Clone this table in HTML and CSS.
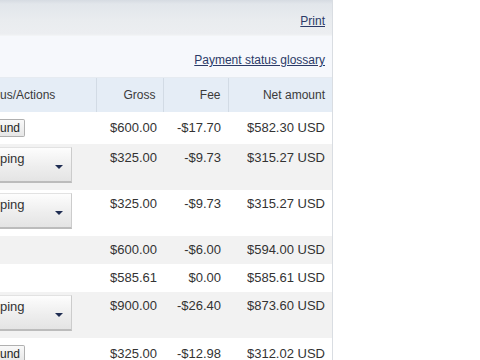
FILE: index.html
```html
<!DOCTYPE html>
<html>
<head>
<meta charset="utf-8">
<link rel="stylesheet" href="styles.css">
</head>
<body>
<div class="panel">
  <div class="topbar"><a class="link" href="#">Print</a></div>
  <div class="glossary"><a class="link" href="#">Payment status glossary</a></div>
  <table class="grid">
    <colgroup>
      <col class="c-status"><col class="c-gross"><col class="c-fee"><col class="c-net">
    </colgroup>
    <thead>
      <tr>
        <th class="first">us/Actions</th>
        <th>Gross</th>
        <th>Fee</th>
        <th>Net amount</th>
      </tr>
    </thead>
    <tbody>
      <tr class="plain">
        <td class="first"><button class="btn">und</button></td>
        <td>$600.00</td><td>-$17.70</td><td>$582.30 USD</td>
      </tr>
      <tr class="sel alt">
        <td class="first"><div class="dd"><span>ping</span><i class="arrow"></i></div></td>
        <td>$325.00</td><td>-$9.73</td><td>$315.27 USD</td>
      </tr>
      <tr class="sel">
        <td class="first"><div class="dd"><span>ping</span><i class="arrow"></i></div></td>
        <td>$325.00</td><td>-$9.73</td><td>$315.27 USD</td>
      </tr>
      <tr class="plain alt">
        <td class="first"></td>
        <td>$600.00</td><td>-$6.00</td><td>$594.00 USD</td>
      </tr>
      <tr class="plain">
        <td class="first"></td>
        <td>$585.61</td><td>$0.00</td><td>$585.61 USD</td>
      </tr>
      <tr class="sel alt">
        <td class="first"><div class="dd"><span>ping</span><i class="arrow"></i></div></td>
        <td>$900.00</td><td>-$26.40</td><td>$873.60 USD</td>
      </tr>
      <tr class="plain">
        <td class="first"><button class="btn">und</button></td>
        <td>$325.00</td><td>-$12.98</td><td>$312.02 USD</td>
      </tr>
    </tbody>
  </table>
</div>
</body>
</html>
```
FILE: styles.css
```css
html, body {
  margin: 0;
  padding: 0;
  background: #ffffff;
  height: 100%;
  overflow: hidden;
}
body {
  font-family: "Liberation Sans", Arial, sans-serif;
  color: #333333;
}
.panel {
  width: 332px;
  min-height: 100%;
  border-right: 1px solid #d9dde2;
  background: #ffffff;
}
.topbar {
  height: 36px;
  box-sizing: border-box;
  background: linear-gradient(#d6dbe2 0px, #e2e6eb 4px, #e9ecef 20px, #eceef1 34px, #f4f6f8 36px);
  display: flex;
  justify-content: flex-end;
  align-items: flex-start;
  padding: 14px 7px 0 0;
}
.glossary {
  height: 42px;
  box-sizing: border-box;
  background: #f6f8fc;
  display: flex;
  justify-content: flex-end;
  align-items: flex-start;
  padding: 17px 7px 0 0;
  border-bottom: 1px solid #e6ebf1;
}
.link {
  font-size: 12px;
  line-height: 14px;
  color: #2b3a67;
  text-decoration: underline;
}
.grid {
  width: 332px;
  border-collapse: collapse;
  table-layout: fixed;
}
.c-status { width: 96px; }
.c-gross { width: 67px; }
.c-fee { width: 65px; }
.c-net { width: 104px; }
.grid th {
  height: 34px;
  background: #e5edf6;
  font-weight: normal;
  font-size: 12px;
  text-align: right;
  padding: 0 7px 0 0;
  border-left: 1px solid #d2dbe5;
  color: #3a3a3a;
}
.grid th.first {
  text-align: left;
  padding-left: 0;
  border-left: none;
}
.grid td {
  font-size: 13px;
  line-height: 16px;
  text-align: right;
  padding: 6px 7px 6px 0;
  white-space: nowrap;
  color: #333333;
}
.grid td:nth-child(2) { padding-right: 6px; }
.grid td.first {
  text-align: left;
  padding-left: 0;
}
.plain td { vertical-align: middle; }
.sel td { vertical-align: top; }
.sel td.first { padding-top: 3px; padding-bottom: 7px; }
.alt td { background: #f2f2f2; }
.btn {
  display: block;
  height: 18px;
  margin: 1px 0;
  font-family: "Liberation Sans", Arial, sans-serif;
  font-size: 12px;
  line-height: 14px;
  color: #222222;
  background: linear-gradient(#f9f9f9, #e6e6e6);
  border: 1px solid #b0b0b0;
  border-left: none;
  padding: 0 4px 0 0;
  border-radius: 0 2px 2px 0;
}
.dd {
  width: 72px;
  height: 36px;
  box-sizing: border-box;
  display: flex;
  justify-content: space-between;
  align-items: flex-start;
  padding: 3px 8px 0 0;
  background: linear-gradient(#fdfdfd, #eeeeee 55%, #e4e4e4);
  border-top: 1px solid #e2e2e2;
  border-right: 1px solid #cccccc;
  border-bottom: 2px solid #bcbcbc;
  font-size: 13px;
  line-height: 16px;
  color: #333333;
}
.arrow {
  display: block;
  width: 0;
  height: 0;
  margin-top: 14px;
  border-left: 4px solid transparent;
  border-right: 4px solid transparent;
  border-top: 4px solid #1f2d52;
}
```
